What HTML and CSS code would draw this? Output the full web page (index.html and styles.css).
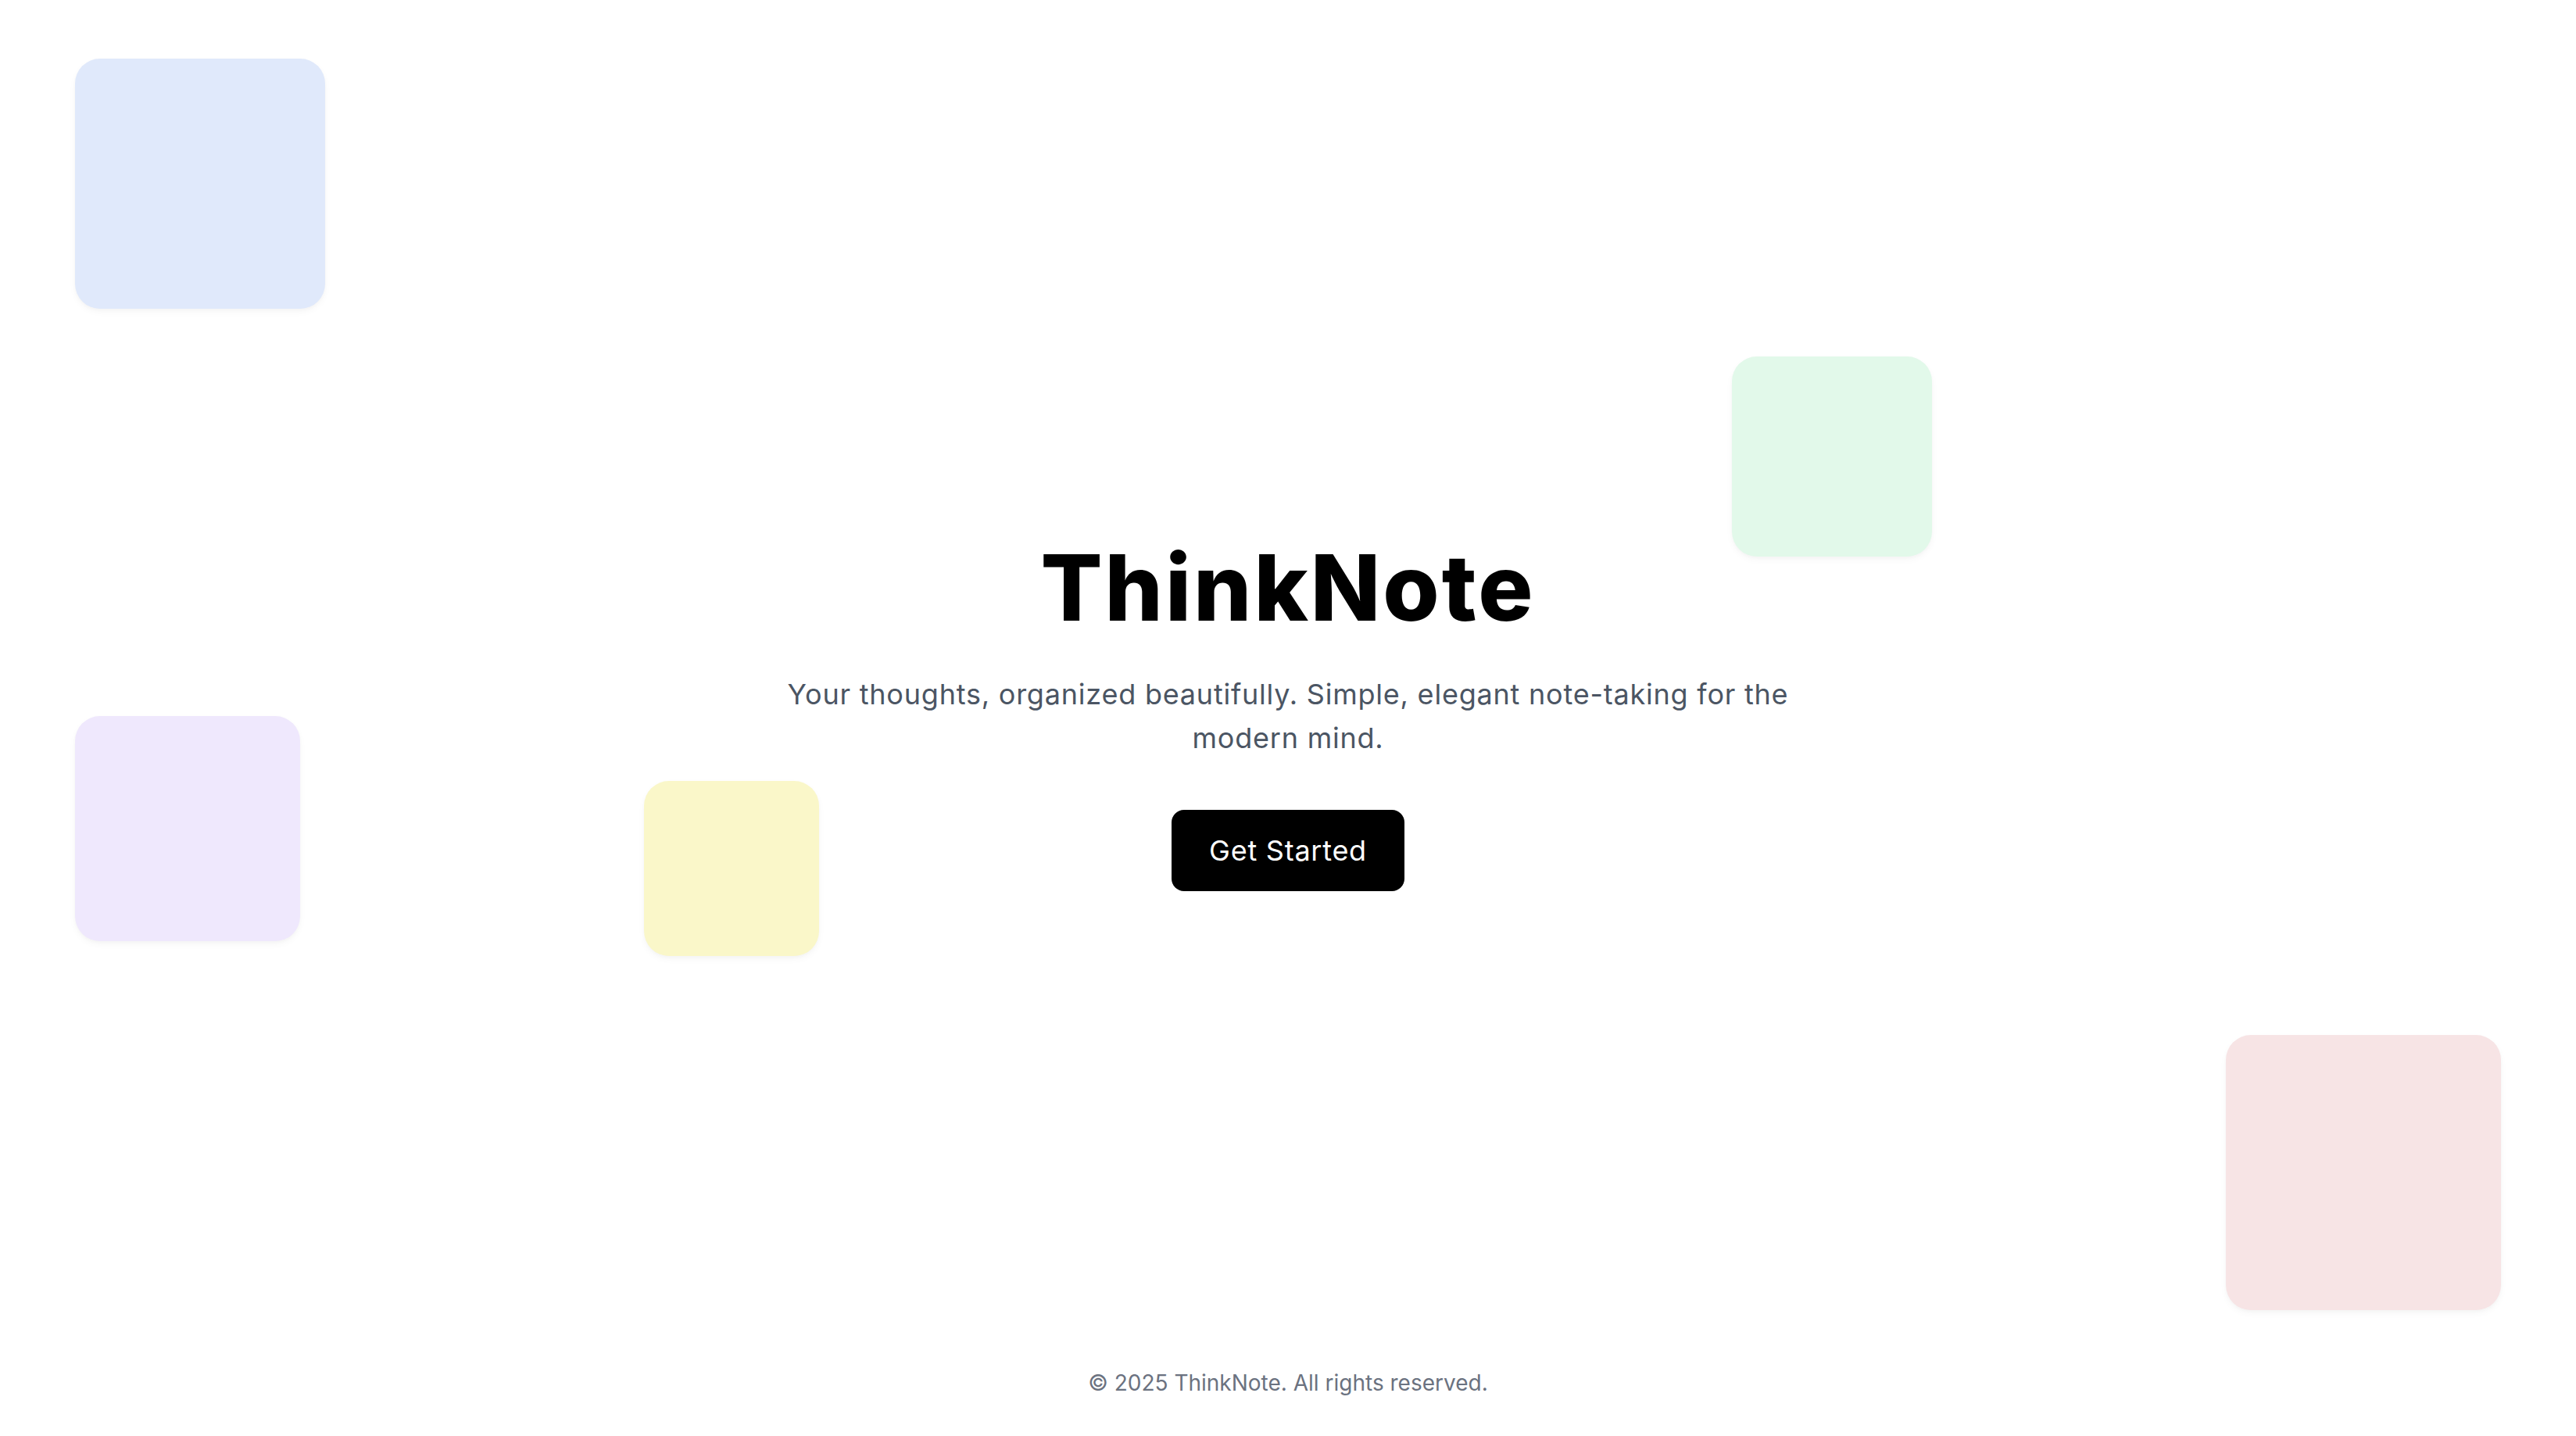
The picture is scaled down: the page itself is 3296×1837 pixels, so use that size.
FILE: index.html
```html
<!DOCTYPE html>
<html lang="en">
<head>
<meta charset="utf-8">
<title>ThinkNote</title>
<link rel="stylesheet" href="styles.css">
</head>
<body>
<div class="page">
  <div class="note note-blue"></div>
  <div class="note note-green"></div>
  <div class="note note-purple"></div>
  <div class="note note-yellow"></div>
  <div class="note note-pink"></div>
  <main class="hero">
    <h1 class="hero-title">ThinkNote</h1>
    <p class="hero-sub">Your thoughts, organized beautifully. Simple, elegant note-taking for the modern mind.</p>
    <a class="hero-btn" href="#">Get Started</a>
  </main>
  <footer class="footer">© 2025 ThinkNote. All rights reserved.</footer>
</div>
</body>
</html>
```

FILE: styles.css
```css
* { box-sizing: border-box; }
html, body { margin: 0; padding: 0; background: #ffffff; }
body {
  font-family: Inter, "Noto Sans", "Open Sans", sans-serif;
  color: #000;
}
.page {
  position: relative;
  min-height: 1837px;
  display: flex;
  flex-direction: column;
  overflow: hidden;
}
.note {
  position: absolute;
  border-radius: 32px;
  box-shadow: 0 4px 10px rgba(0, 0, 0, 0.035), 0 2px 4px rgba(0, 0, 0, 0.02);
}
.note-blue { left: 96px; top: 75px; width: 320px; height: 320px; background: #e0e9fb; }
.note-green { left: 2216px; top: 456px; width: 256px; height: 256px; background: #e2f9ea; }
.note-purple { left: 96px; top: 916px; width: 288px; height: 288px; background: #efe8fd; }
.note-yellow { left: 824px; top: 999px; width: 224px; height: 224px; background: #faf7c9; }
.note-pink { left: 2848px; top: 1324px; width: 352px; height: 352px; background: #f7e4e5; }

.hero {
  position: relative;
  flex: 1;
  display: flex;
  flex-direction: column;
  align-items: center;
  justify-content: center;
  padding-top: 130px;
  text-align: center;
}
.hero-title {
  margin: 0 0 48px;
  font-size: 117px;
  line-height: 120px;
  font-weight: 800;
  letter-spacing: 3px;
  color: #000;
}
.hero-sub {
  margin: 0 0 64px;
  max-width: 1344px;
  font-size: 36px;
  line-height: 56px;
  font-weight: 400;
  letter-spacing: 0.78px;
  color: #4b5563;
}
.hero-btn {
  display: inline-block;
  padding: 24px 48px;
  font-size: 36px;
  line-height: 56px;
  letter-spacing: 0.75px;
  color: #fff;
  background: #000;
  border-radius: 16px;
  text-decoration: none;
}
.footer {
  position: relative;
  padding: 48px 0;
  text-align: center;
  font-size: 28px;
  line-height: 40px;
  color: #6b7280;
}
```
